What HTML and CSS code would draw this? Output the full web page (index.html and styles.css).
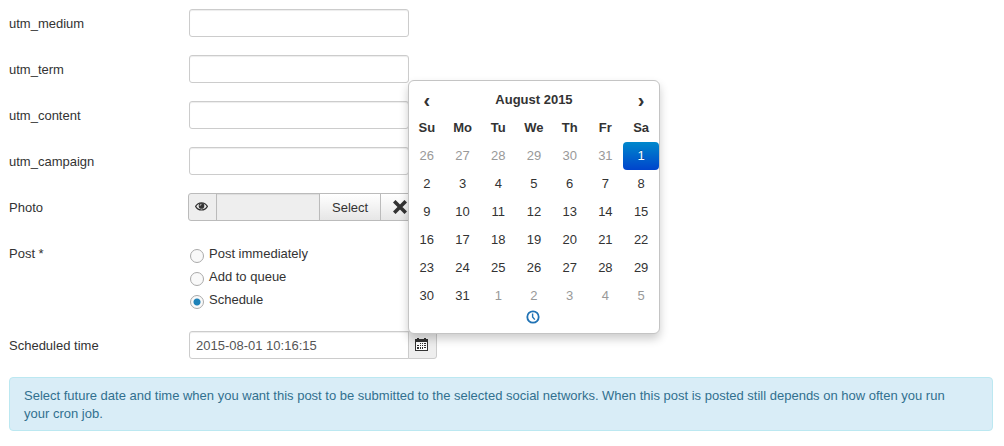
FILE: index.html
```html
<!DOCTYPE html>
<html lang="en">
<head>
<meta charset="utf-8">
<title>Schedule post</title>
<link rel="stylesheet" href="styles.css">
</head>
<body>
<form class="form">
  <div class="row"><label class="label" for="medium">utm_medium</label><input class="field" id="medium" type="text"></div>
  <div class="row"><label class="label" for="term">utm_term</label><input class="field" id="term" type="text"></div>
  <div class="row"><label class="label" for="content">utm_content</label><input class="field" id="content" type="text"></div>
  <div class="row"><label class="label" for="campaign">utm_campaign</label><input class="field" id="campaign" type="text"></div>
  <div class="row">
    <label class="label" for="photo">Photo</label>
    <div class="media">
      <span class="addon addon-eye"><svg width="13" height="9" viewBox="0 0 13 9"><path d="M.6 4.4C2 2 4 .8 6.5.8s4.500 1.200 5.900 3.600C11 6.800 9 8 6.500 8S2 6.800.6 4.400Z" fill="none" stroke="#333" stroke-width="1.200"/><circle cx="6.500" cy="3.900" r="2.800" fill="#333"/><path d="M5 3.800A1.500 1.500 0 0 1 6.500 2.300" fill="none" stroke="#eee" stroke-width=".8"/></svg></span>
      <input class="media-path" id="photo" type="text" readonly>
      <button class="btn" type="button">Select</button>
      <button class="btn btn-clear" type="button" aria-label="Clear"><svg width="14" height="14" viewBox="0 0 14 14"><path d="M2.500 2.500l9 9M11.500 2.500l-9 9" stroke="#333" stroke-width="3.600" stroke-linecap="square" stroke-linejoin="round"/></svg></button>
    </div>
  </div>
  <div class="row">
    <span class="label" id="post-label">Post *</span>
    <div class="radios" role="radiogroup" aria-labelledby="post-label">
      <label class="radio"><input type="radio" name="post">Post immediately</label>
      <label class="radio"><input type="radio" name="post">Add to queue</label>
      <label class="radio"><input type="radio" name="post" checked>Schedule</label>
    </div>
  </div>
  <div class="row">
    <label class="label" for="time">Scheduled time</label>
    <div class="date">
      <input class="field date-field" id="time" type="text" value="2015-08-01 10:16:15">
      <button class="addon addon-calendar" type="button" aria-label="Open calendar"><svg width="13" height="13" viewBox="0 0 13 13" shape-rendering="crispEdges"><path d="M0 1h2V0h2v1h5V0h2v1h2v3H0z" fill="#333"/><path d="M0 4h13v9H0z" fill="#333"/><path d="M1 4h11v8H1z" fill="#fff"/><path d="M5 5h1v1H5zM7 5h1v1H7zM9 5h2v1H9zM2 7h2v1H2zM5 7h1v1H5zM7 7h1v1H7zM9 7h2v1H9zM2 9h2v2H2zM5 9h1v2H5zM7 9h1v2H7zM9 9h2v1H9z" fill="#333"/></svg></button>
      <div class="picker">
        <table class="days">
          <thead>
            <tr class="month"><th><button type="button" class="nav" aria-label="Previous month">‹</button></th><th colspan="5">August 2015</th><th><button type="button" class="nav" aria-label="Next month">›</button></th></tr>
            <tr><th>Su</th><th>Mo</th><th>Tu</th><th>We</th><th>Th</th><th>Fr</th><th>Sa</th></tr>
          </thead>
          <tbody>
            <tr><td class="other">26</td><td class="other">27</td><td class="other">28</td><td class="other">29</td><td class="other">30</td><td class="other">31</td><td class="active">1</td></tr>
            <tr><td>2</td><td>3</td><td>4</td><td>5</td><td>6</td><td>7</td><td>8</td></tr>
            <tr><td>9</td><td>10</td><td>11</td><td>12</td><td>13</td><td>14</td><td>15</td></tr>
            <tr><td>16</td><td>17</td><td>18</td><td>19</td><td>20</td><td>21</td><td>22</td></tr>
            <tr><td>23</td><td>24</td><td>25</td><td>26</td><td>27</td><td>28</td><td>29</td></tr>
            <tr><td>30</td><td>31</td><td class="other">1</td><td class="other">2</td><td class="other">3</td><td class="other">4</td><td class="other">5</td></tr>
          </tbody>
        </table>
        <button class="clock" type="button" aria-label="Choose time"><svg width="14" height="14" viewBox="0 0 14 14" fill="none" stroke="#2173b5"><circle cx="7" cy="7" r="5.700" stroke-width="1.800"/><path d="M6.600 3.500V7l2.200 2.600" stroke-width="1.400"/></svg></button>
      </div>
    </div>
  </div>
  <div class="alert">Select future date and time when you want this post to be submitted to the selected social networks. When this post is posted still depends on how often you run your cron job.</div>
</form>
</body>
</html>
```
FILE: styles.css
```css
* { box-sizing: border-box; }
body {
  margin: 0;
  padding: 9px 11px 9px 9px;
  background: #fff;
  color: #333;
  font: 13px/18px "Liberation Sans", Arial, sans-serif;
}
input, button { font: inherit; color: inherit; margin: 0; }
button { padding: 0; cursor: pointer; }
svg { display: block; }
.form { display: flex; flex-direction: column; gap: 18px; }
.row { display: flex; align-items: flex-start; }
.label { width: 180px; padding-top: 6px; flex: none; }
.field {
  width: 220px;
  height: 28px;
  padding: 4px 6px;
  border: 1px solid #ccc;
  border-radius: 3px;
  background: #fff;
  color: #555;
  box-shadow: inset 0 1px 1px rgba(0, 0, 0, .075);
}
.media { display: flex; height: 28px; margin-left: -1px; }
.addon {
  display: flex;
  align-items: center;
  justify-content: center;
  height: 28px;
  border: 1px solid #ccc;
  background: #eee;
}
.addon-eye { width: 29px; padding: 0 2px 2px 0; border-color: #bbb; border-radius: 3px 0 0 3px; }
.media-path {
  width: 104px;
  margin-left: -1px;
  border: 1px solid #bbb;
  background: #eee;
  box-shadow: inset 0 1px 1px rgba(0, 0, 0, .075);
}
.btn {
  margin-left: -1px;
  padding: 2px 12px 0;
  border: 1px solid #bbb;
  background: linear-gradient(#fff, #e6e6e6);
}
.btn-clear { padding-top: 0; border-radius: 0 3px 3px 0; }
.radios { padding-top: 6px; }
.radio { display: flex; gap: 5px; height: 18px; margin-bottom: 5px; }
.radio:last-child { margin-bottom: 4px; }
.radio input {
  appearance: none;
  width: 14px;
  height: 14px;
  margin: 4px 0 0 1px;
  border: 1px solid #aaa;
  border-radius: 50%;
  background: #f9f9f9;
}
.radio input:checked { background: radial-gradient(circle, #1e82b8 3px, #f9f9f9 4px); }
.date { position: relative; display: flex; }
.date-field { border-radius: 3px 0 0 3px; }
.addon-calendar { width: 29px; padding: 0 2px 2px 0; margin-left: -1px; border-radius: 0 3px 3px 0; }
.picker {
  position: absolute;
  left: 219px;
  bottom: 25px;
  width: 252px;
  padding: 5px 0 9px;
  border: 1px solid #c4c4c4;
  border-radius: 6px;
  background: #fff;
  box-shadow: 0 5px 10px rgba(0, 0, 0, .2);
}
.days { width: 100%; border-collapse: collapse; table-layout: fixed; text-align: center; }
.days th, .days td { height: 28px; padding: 0; border-radius: 4px; }
.days .other { color: #999; }
.days .active {
  color: #fff;
  background: linear-gradient(#08c, #04c);
  text-shadow: 0 -1px 0 rgba(0, 0, 0, .25);
}
.nav {
  width: 100%;
  height: 28px;
  border: 0;
  background: none;
  font-size: 20px;
  font-weight: bold;
  line-height: 28px;
}
.clock { display: flex; justify-content: center; width: 100%; padding: 0 3px 0 0; border: 0; background: none; }
.alert {
  padding: 9px 35px 7px 14px;
  border: 1px solid #bce8f1;
  border-radius: 4px;
  background: #d9edf7;
  color: #31708f;
}
```
